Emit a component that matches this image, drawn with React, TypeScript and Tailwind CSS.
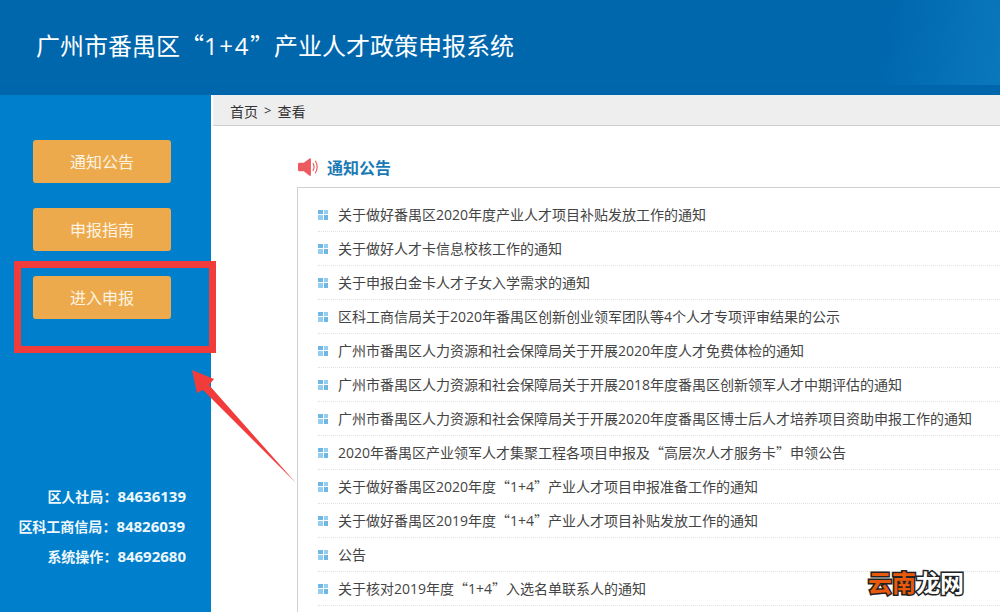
const items = [
  "关于做好番禺区2020年度产业人才项目补贴发放工作的通知",
  "关于做好人才卡信息校核工作的通知",
  "关于申报白金卡人才子女入学需求的通知",
  "区科工商信局关于2020年番禺区创新创业领军团队等4个人才专项评审结果的公示",
  "广州市番禺区人力资源和社会保障局关于开展2020年度人才免费体检的通知",
  "广州市番禺区人力资源和社会保障局关于开展2018年度番禺区创新领军人才中期评估的通知",
  "广州市番禺区人力资源和社会保障局关于开展2020年度番禺区博士后人才培养项目资助申报工作的通知",
  "2020年番禺区产业领军人才集聚工程各项目申报及“高层次人才服务卡”申领公告",
  "关于做好番禺区2020年度“1+4”产业人才项目申报准备工作的通知",
  "关于做好番禺区2019年度“1+4”产业人才项目补贴发放工作的通知",
  "公告",
  "关于核对2019年度“1+4”入选名单联系人的通知",
];

function Mixed({ text }: { text: string }) {
  return (
    <>
      {text.split(/([0-9+]+)/).map((part, i) =>
        i % 2 === 1 ? (
          <span key={i} className="font-['Open_Sans',sans-serif]">
            {part}
          </span>
        ) : (
          part
        ),
      )}
    </>
  );
}

function Bullet() {
  return (
    <span className="grid h-[10px] w-[10px] shrink-0 grid-cols-2 gap-px">
      <i className="bg-[#6fb8e6]" />
      <i className="bg-[#93cdf0]" />
      <i className="bg-[#93cdf0]" />
      <i className="bg-[#6fb8e6]" />
    </span>
  );
}

function Speaker() {
  return (
    <svg width="23" height="20" viewBox="0 0 24 20" className="ml-px shrink-0">
      <path d="M0 6.5 Q0 5.5 1.5 5.5 H6 L12 1 Q13.5 0.3 13.5 2 V18 Q13.5 19.7 12 19 L6 14.5 H1.5 Q0 14.5 0 13.5 Z" fill="#ec5b5f" />
      <path d="M15.5 6 Q18 10 15.5 14" fill="none" stroke="#ec5b5f" strokeWidth="1.2" />
      <path d="M18 3.5 Q22 10 18 16.5" fill="none" stroke="#ec5b5f" strokeWidth="1.2" />
    </svg>
  );
}

function NavButton({ label }: { label: string }) {
  return (
    <div className="flex h-[43px] w-[138px] items-center justify-center rounded-[3px] bg-[#edaa4d] pb-[2px] text-[16px] text-[#fdf3e2]">
      {label}
    </div>
  );
}

function Contact({ label, phone, inset }: { label: string; phone: string; inset?: boolean }) {
  return (
    <div className={inset ? "flex h-[30px] items-center justify-end whitespace-nowrap pr-px text-[14px] font-bold text-[#eef7fc]" : "flex h-[30px] items-center justify-end whitespace-nowrap text-[14px] font-bold text-[#eef7fc]"}>
      <span>{label}：</span>
      <span className="font-['Open_Sans',sans-serif] text-[15px]">{phone}</span>
    </div>
  );
}

export default function App() {
  return (
    <div lang="zh-CN" className="relative h-[612px] w-[1000px] overflow-hidden bg-white font-['Noto_Sans_CJK_SC','Open_Sans',sans-serif]">
      <header className="flex h-[95px] items-center border-b-[10px] border-[#0066ab] bg-[linear-gradient(100deg,#0067ad_88%,#0a78bd_100%)] pl-[36px] pt-[5px]">
        <h1 className="whitespace-nowrap text-[24px] font-normal text-white">
          广州市番禺区“<span className="font-['Open_Sans',sans-serif] tracking-[1.6px]">1+4</span>”产业人才政策申报系统
        </h1>
      </header>
      <div className="flex h-[517px]">
        <aside className="flex w-[211px] shrink-0 flex-col bg-[#0080cc]">
          <div className="flex flex-col gap-[25px] pl-[33px] pt-[45px]">
            <NavButton label="通知公告" />
            <NavButton label="申报指南" />
            <NavButton label="进入申报" />
          </div>
          <div className="mt-[162px] pr-[25px]">
            <Contact label="区人社局" phone="84636139" />
            <Contact label="区科工商信局" phone="84826039" inset />
            <Contact label="系统操作" phone="84692680" />
          </div>
        </aside>
        <main className="ml-[2px] min-w-0 flex-1">
          <div className="flex h-[31px] items-center border-b border-[#cfcfcf] bg-[#eeeeee] pl-[17px] pt-[2px] text-[14px] text-[#333]">
            首页 <span className="mx-[6px] font-['Open_Sans',sans-serif] text-[13px]">&gt;</span> 查看
          </div>
          <div className="pl-[84px]">
            <div className="flex h-[61px] items-center gap-[6px] pt-[20px]">
              <Speaker />
              <span className="text-[16px] font-bold text-[#1a7ab5]">通知公告</span>
            </div>
            <ul className="h-[500px] border-l border-t border-[#d0d0d0] pl-[20px] pt-[10px]">
              {items.map((t) => (
                <li key={t} className="flex h-[34px] items-center gap-[10px] whitespace-nowrap border-b border-dotted border-[#e2e2e2] text-[14px] text-[#444]">
                  <Bullet />
                  <span>
                    <Mixed text={t} />
                  </span>
                </li>
              ))}
            </ul>
          </div>
        </main>
      </div>

      <div className="absolute left-[14px] top-[261px] h-[92px] w-[202px] border-[7px] border-[#f23c3c]" />
      <svg className="absolute left-[190px] top-[368px]" width="110" height="118" viewBox="0 0 110 118">
        <path d="M2 2 L24 11 L19 17 L106 115 L13 22 L7 25 Z" fill="#f23c3c" />
      </svg>
      <div className="absolute left-[868px] top-[570px] text-[24px] font-bold leading-none [-webkit-text-stroke:3px_#222] [paint-order:stroke_fill]">
        <span className="text-[#e8590c]">云南</span>
        <span className="text-white">龙网</span>
      </div>
    </div>
  );
}
